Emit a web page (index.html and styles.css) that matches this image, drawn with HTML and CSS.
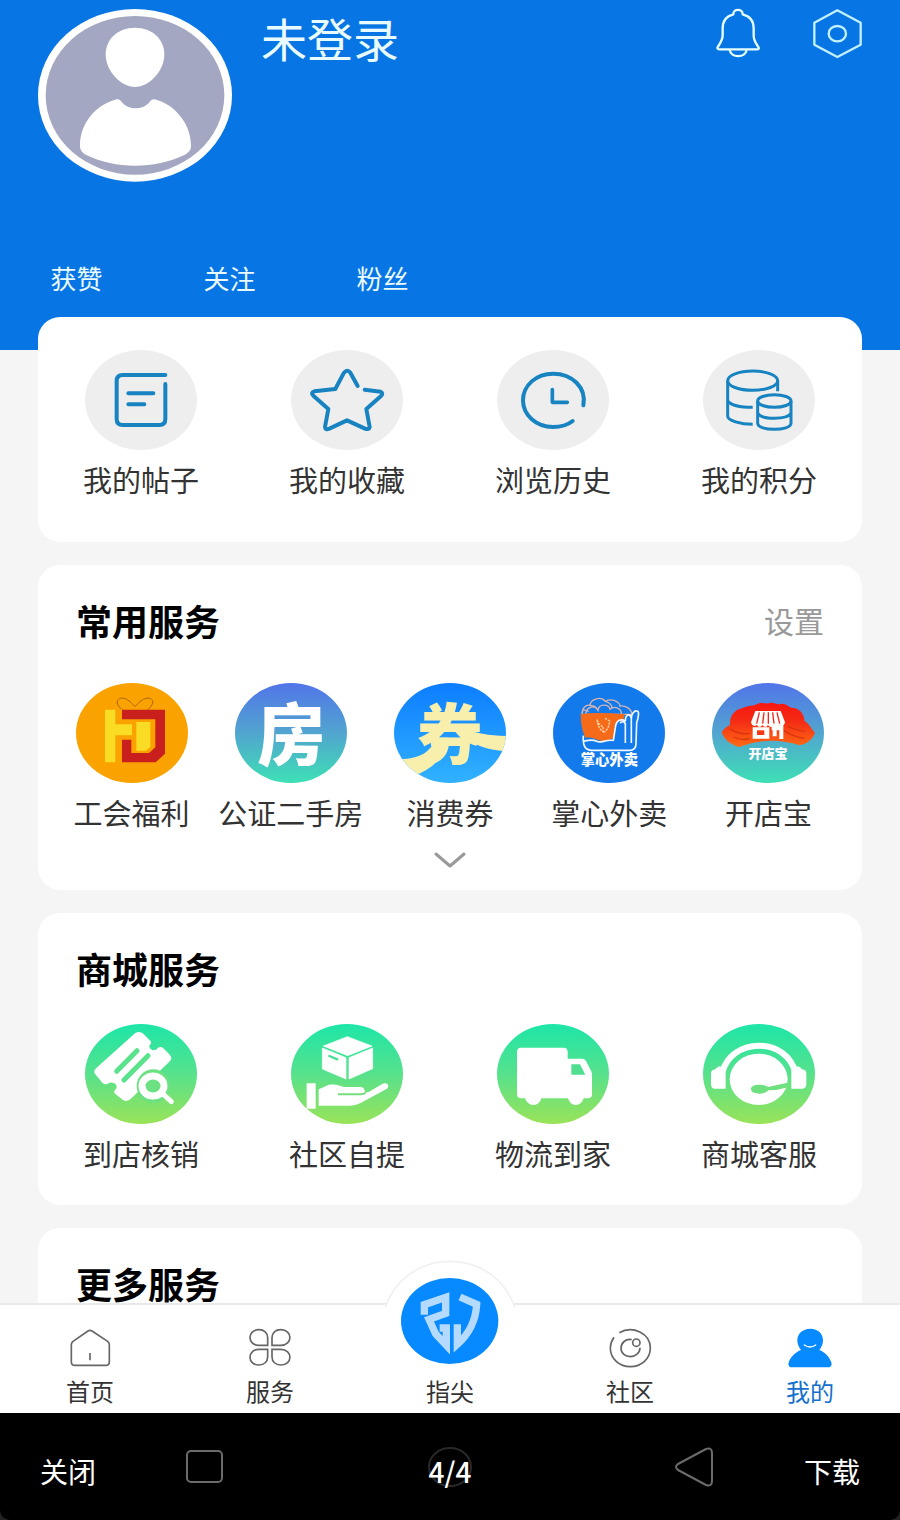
FILE: index.html
```html
<!DOCTYPE html>
<html lang="zh-CN">
<head>
<meta charset="utf-8">
<meta name="viewport" content="width=device-width, initial-scale=1">
<title>我的</title>
<link rel="stylesheet" href="styles.css">
</head>
<body>
<div class="app">
  <header class="profile">
    <div class="profile-top">
      <svg class="avatar" viewBox="114 21 582 528" aria-hidden="true">
        <ellipse cx="405" cy="286" rx="291" ry="259" fill="#fff"/>
        <ellipse cx="405" cy="286" rx="268" ry="238" fill="#a3a7c1"/>
        <path d="M405 83c52 0 88 35 88 80 0 50-45 98-88 98s-88-48-88-98c0-45 36-80 88-80z" fill="#fff"/>
        <path d="M350 298c8-2 11 3 17 10 20 22 60 22 80 0 6-7 9-12 17-10 66 17 110 80 109 140 0 14-8 20-20 27-90 43-206 43-294 0-12-7-19-14-19-28 0-66 46-122 110-139z" fill="#fff"/>
      </svg>
      <h1 class="name">未登录</h1>
      <div class="actions">
        <button class="plain" aria-label="消息">
          <svg class="bell" viewBox="108 21 132 162" fill="none" stroke="#e6ffff" stroke-width="7" stroke-linejoin="round">
            <path d="M160 43c0-18 28-18 28 0 24 6 33 20 33 42v22c0 14 5 20 14 34 3 5 1 7-5 7H118c-6 0-7-3-4-8 9-14 14-20 14-34V85c0-22 9-36 32-42z"/>
            <path d="M149 149c3 26 48 26 51 0"/>
          </svg>
        </button>
        <button class="plain" aria-label="设置">
          <svg class="gear" viewBox="396 21 150 162" fill="none" stroke="#c2f1ff" stroke-width="7" stroke-linejoin="round">
            <path d="M472 31l70 37v66l-70 37-69-37V68z"/>
            <ellipse cx="472" cy="101" rx="26" ry="23"/>
          </svg>
        </button>
      </div>
    </div>
    <nav class="stats">
      <a href="#likes">获赞</a>
      <a href="#following">关注</a>
      <a href="#fans">粉丝</a>
    </nav>
  </header>

  <main class="content">
    <section class="card shortcuts">
      <div class="grid four">
        <a class="item" href="#posts">
          <svg class="icon" viewBox="73 30 336 300" fill="none" stroke="#1783c0" stroke-width="12" stroke-linecap="round" stroke-linejoin="round">
            <ellipse cx="241" cy="180" rx="168" ry="150" fill="#eee" stroke="none"/>
            <path d="M314 105H186q-18 0-18 18v114q0 18 18 18h110q18 0 18-18V132M203 160h75M203 193h48"/>
          </svg>
          <span>我的帖子</span>
        </a>
        <a class="item" href="#favorites">
          <svg class="icon" viewBox="691 30 336 300" fill="none" stroke="#1783c0" stroke-width="12" stroke-linecap="round" stroke-linejoin="round">
            <ellipse cx="859" cy="180" rx="168" ry="150" fill="#eee" stroke="none"/>
            <path d="M891 138l-22-40q-9-12-19 0l-26 49-63 7q-12 4-3 13l45 40-10 54q1 10 13 5l53-25 54 25q12 4 14-5l-10-54 44-39q8-8-1-13l-48-6"/>
          </svg>
          <span>我的收藏</span>
        </a>
        <a class="item" href="#history">
          <svg class="icon" viewBox="78 30 336 300" fill="none" stroke="#1783c0" stroke-width="12" stroke-linecap="round" stroke-linejoin="round">
            <ellipse cx="246" cy="180" rx="168" ry="150" fill="#eee" stroke="none"/>
            <path d="M337 196C347 142 303 101 246 101c-50 0-90 35-90 80s40 80 90 80c23 0 44-6 59-18"/>
            <path d="M244 149v38h45" stroke-width="11"/>
          </svg>
          <span>浏览历史</span>
        </a>
        <a class="item" href="#points">
          <svg class="icon" viewBox="698 30 336 300" fill="none" stroke="#1783c0" stroke-width="9">
            <ellipse cx="866" cy="180" rx="168" ry="150" fill="#eee" stroke="none"/>
            <ellipse cx="847" cy="122" rx="75" ry="29"/>
            <path d="M772 122v107c0 12 38 24 75 24M772 183c10 13 42 19 75 19M922 122v32"/>
            <ellipse cx="912" cy="183" rx="50" ry="19"/>
            <path d="M862 183v67c0 24 100 24 100 0v-67M862 220c12 20 88 20 100 0"/>
          </svg>
          <span>我的积分</span>
        </a>
      </div>
    </section>

    <section class="card common">
      <div class="card-head">
        <h2>常用服务</h2>
        <a class="more" href="#settings">设置</a>
      </div>
      <div class="grid five">
        <a class="item" href="#welfare">
          <svg class="icon" viewBox="138 278 336 300">
            <ellipse cx="306" cy="428" rx="168" ry="150" fill="#faa200"/>
            <path d="M276 358q-20-18-13-28c14-18 40 4 52 19 12-15 38-37 52-19q6 10-13 28" fill="none" stroke="#ad6413" stroke-width="3"/>
            <path d="M276 358h129v132l-28 26H276v-68h28v40h53l19-17v-84H276z" fill="#c9201e"/>
            <path d="M225 358h31v44h50v33h-50v81h-31zM319 395h42v75l-14 11h-28z" fill="#fbdc24"/>
          </svg>
          <span>工会福利</span>
        </a>
        <a class="item" href="#house">
          <svg class="icon" viewBox="615 278 336 300">
            <defs><linearGradient id="sky" x1="0" y1="0" x2="0" y2="1"><stop offset="0" stop-color="#5275e8"/><stop offset=".5" stop-color="#51a5cf"/><stop offset="1" stop-color="#3ee0b5"/></linearGradient></defs>
            <ellipse cx="783" cy="428" rx="168" ry="150" fill="url(#sky)"/>
            <text class="glyph" x="784" y="509" font-size="204" fill="#fff">房</text>
          </svg>
          <span>公证二手房</span>
        </a>
        <a class="item" href="#coupon">
          <svg class="icon" viewBox="1094 278 336 300">
            <defs>
              <linearGradient id="azure" x1="0" y1="0" x2="0" y2="1"><stop offset="0" stop-color="#0c7dff"/><stop offset="1" stop-color="#31b2ff"/></linearGradient>
              <clipPath id="disc"><ellipse cx="1262" cy="428" rx="168" ry="150"/></clipPath>
            </defs>
            <ellipse cx="1262" cy="428" rx="168" ry="150" fill="url(#azure)"/>
            <path clip-path="url(#disc)" d="M1218 442c-10 40-45 64-105 64l42 50c55-20 92-56 103-114zM1300 411c40 20 85 26 140 26v46c-65-3-110-16-150-59z" fill="#f8efac"/>
            <text class="glyph" x="1262" y="507" font-size="198" fill="#f8efac">券</text>
          </svg>
          <span>消费券</span>
        </a>
        <a class="item" href="#takeout">
          <svg class="icon" viewBox="307 278 336 300">
            <ellipse cx="475" cy="428" rx="168" ry="150" fill="#127aeb"/>
            <g fill="#127aeb" stroke="#d3b3b4" stroke-width="4">
              <path d="M394 372c0-20 12-30 24-27 2-20 34-28 46-12 18-10 42 0 44 14 15-3 34 8 36 25z"/>
              <path d="M406 372c-1-22 26-30 36-12 2-20 32-20 36-3 14-12 36-3 34 15M418 346q14-2 20 8M464 333q20 6 20 20M396 360q12-2 18 4" fill="none"/>
            </g>
            <path d="M390 372q45-8 132 0l-6 30c-18 20-24 54-60 50-24-4-30-12-52-10-10-20-14-44-14-70z" fill="#f66b19"/>
            <path d="M439 388q8 20 18 20v16q-14-8-18-36zM463 384l14 8q-2 24-17 34" fill="none" stroke="#ffd6a8" stroke-width="4" stroke-dasharray="7 3"/>
            <path d="M492 452V412c2-22 14-26 30-20l22 0v84H440z" fill="#127aeb"/>
            <path d="M398 436c-2 30 5 44 26 44h112c14 0 20-7 20-20l2-62q10-34 2-36c-10-3-18 10-18 24-2-20-18-14-18 6-14-8-28-2-30 20l-6 38c-28-2-36 10-50 3-16-8-24-3-40 0M524 398v60M542 384v74M508 398q12-10 16 4" fill="none" stroke="#f1f7ff" stroke-width="5" stroke-linejoin="round"/>
            <text class="glyph" x="476" y="523" font-size="43" fill="#fff">掌心外卖</text>
          </svg>
          <span>掌心外卖</span>
        </a>
        <a class="item" href="#shop">
          <svg class="icon" viewBox="785 278 336 300">
            <defs><linearGradient id="flame" x1="0" y1="0" x2="0" y2="1"><stop offset="0" stop-color="#fa1710"/><stop offset=".4" stop-color="#f42a14"/><stop offset="1" stop-color="#ff6a14"/></linearGradient></defs>
            <ellipse cx="953" cy="428" rx="168" ry="150" fill="url(#sky)"/>
            <path d="M814 426q10-16 25-22c-2-24 12-46 36-50 22-10 34-6 44-12 16-10 28 2 38-4 14-4 20 6 34 3 18-4 24 14 40 12 18 2 32 22 31 38 18 12 20 24 32 36-8 22-24 32-46 38q-90-30-182 5c-24-7-44-20-52-44z" fill="url(#flame)"/>
            <path d="M838 415q30 20 62 14M850 440q24 12 48 4M1000 420q30 20 62 24M1012 408q24 12 52 16" fill="none" stroke="#d8330f" stroke-width="4"/>
            <path d="M915 362h76l13 34q-4 16-17 8-8 12-17 0-8 12-17 0-8 12-17 0-8 12-17 0-12 8-17-8z" fill="#fff"/>
            <path d="M927 366l-8 34M941 366l-4 34M954 366v34M967 366l4 34M980 366l8 34" stroke="#f52617" stroke-width="4"/>
            <path d="M907 411h50v34h-50zM964 405h35v41h-12v-26h-8v18h-12v-18h-3z" fill="#fff"/>
            <path d="M920 420h22v14h-22z" fill="#f63818"/>
            <text class="glyph" x="953" y="502" font-size="39" fill="#fff">开店宝</text>
          </svg>
          <span>开店宝</span>
        </a>
      </div>
      <button class="plain expand" aria-label="展开">
        <svg viewBox="0 0 32 16" fill="none" stroke="#999" stroke-width="3" stroke-linecap="round" stroke-linejoin="round"><path d="M2 2l14 12L30 2"/></svg>
      </button>
    </section>

    <section class="card mall">
      <div class="card-head"><h2>商城服务</h2></div>
      <div class="grid four">
        <a class="item" href="#verify">
          <svg class="icon" viewBox="73 252 336 300">
            <defs><linearGradient id="mint" x1="0" y1="0" x2="0" y2="1"><stop offset="0" stop-color="#1de6a8"/><stop offset=".5" stop-color="#57e18c"/><stop offset="1" stop-color="#9ae358"/></linearGradient></defs>
            <ellipse cx="241" cy="402" rx="168" ry="150" fill="url(#mint)"/>
            <path d="M223 280q13-8 25 1l22 23q4 6-3 11-4 10 8 15 10 3 17-7 9-5 16 2l20 20q9 11-2 20L213 474q-12 14-26 6l-24-19q-6-8 3-14 6-12-6-18-12-4-20 3-9 2-15-4l-21-25q-8-9 3-19z" fill="#fff"/>
            <path d="M168 394l61-62M190 420l72-73" stroke="#5be28c" stroke-width="15" stroke-linecap="round" fill="none"/>
            <circle cx="278" cy="438" r="50" fill="#6be182"/>
            <ellipse cx="277" cy="438" rx="33" ry="30" fill="none" stroke="#fff" stroke-width="21"/>
            <path d="M307 462l25 23" stroke="#fff" stroke-width="15" stroke-linecap="round"/>
          </svg>
          <span>到店核销</span>
        </a>
        <a class="item" href="#pickup">
          <svg class="icon" viewBox="691 252 336 300">
            <ellipse cx="859" cy="402" rx="168" ry="150" fill="url(#mint)"/>
            <path d="M860 290l74 28-73 29-73-29zM785 324l71 29v64l-71-30zM865 353l71-29v62l-71 31z" fill="#fff" stroke="#fff" stroke-width="2" stroke-linejoin="round"/>
            <path d="M806 348l24 10" stroke="#45df99" stroke-width="7" stroke-linecap="round"/>
            <path d="M738 430h27v76h-27zM774 448q10-4 22-10c18-10 42-2 54 3h50q13 2 13 17 14-1 25-10l28-17q10-4 16 3 3 9-6 14l-76 41q-16 8-32 8h-94z" fill="#fff"/>
            <path d="M832 463h68q10 0 15-5" fill="none" stroke="#74df7c" stroke-width="6"/>
          </svg>
          <span>社区自提</span>
        </a>
        <a class="item" href="#delivery">
          <svg class="icon" viewBox="78 72 336 300">
            <ellipse cx="246" cy="222" rx="168" ry="150" fill="url(#mint)"/>
            <path d="M150 143h128q12 0 12 12v21h43q8 0 12 7l14 27q4 6 4 14v59q0 12-12 12h-13q-6 20-24 20-17 0-23-20h-80q-5 20-24 20-18 0-25-20h-12q-12 0-12-12V155q0-12 12-12z" fill="#fff"/>
            <path d="M301 193h26l16 31h-42z" fill="#50df91"/>
          </svg>
          <span>物流到家</span>
        </a>
        <a class="item" href="#support">
          <svg class="icon" viewBox="698 72 336 300">
            <ellipse cx="866" cy="222" rx="168" ry="150" fill="url(#mint)"/>
            <path d="M757 214c12-44 54-77 109-77s96 33 108 77" fill="none" stroke="#fff" stroke-width="18"/>
            <path d="M766 206v60h-34q-10-1-10-14v-31q0-12 13-13 5-7 13-9zM963 206v60h33q12-1 12-14v-31q0-12-13-13-5-7-13-9z" fill="#fff"/>
            <ellipse cx="865" cy="238" rx="87" ry="77" fill="#fff"/>
            <path d="M958 247l-64 14c-14-10-52-10-52 6 0 18 42 18 52 4q26 0 52-8l12-4z" fill="#6ee07e"/>
          </svg>
          <span>商城客服</span>
        </a>
      </div>
    </section>

    <section class="card extra">
      <div class="card-head"><h2>更多服务</h2></div>
    </section>
  </main>

  <nav class="tabs">
    <a class="tab" href="#home">
      <svg viewBox="204 324 132 120" fill="none" stroke="#666" stroke-width="5" stroke-linejoin="round"><path d="M264 333q6-4 12 0l47 31q5 4 5 10v51q0 11-11 11h-92q-11 0-11-11v-51q0-6 5-10zM270 399v22"/></svg>
      <span>首页</span>
    </a>
    <a class="tab" href="#services">
      <svg viewBox="745 324 132 120" fill="none" stroke="#666" stroke-width="5"><path d="M804 376h-26c-36 0-36-47 0-47 15 0 26 10 26 24zM817 376h26c37 0 37-47 0-47-15 0-26 10-26 24zM804 388h-26c-36 0-36 47 0 47 15 0 26-10 26-24zM817 388h26c37 0 37 47 0 47-15 0-26-10-26-24z"/></svg>
      <span>服务</span>
    </a>
    <a class="tab" href="#zhijian">
      <svg class="bump" viewBox="6 24 408 324" aria-hidden="true">
        <ellipse cx="210" cy="216" rx="202" ry="184" fill="#fff"/>
        <path d="M16 172C42 92 116 34 210 34s168 58 194 138" fill="none" stroke="#f0f0f0" stroke-width="5"/>
        <ellipse cx="209" cy="213" rx="146" ry="129" fill="#078aff"/>
        <g fill="none" stroke="#b4daff" stroke-width="22">
          <path d="M133 194v-30l64-22v48l-50 18 20 44 32 34v-52h-20"/>
          <path d="M240 141l50 22q-4 72-58 120v-60"/>
        </g>
      </svg>
      <span>指尖</span>
    </a>
    <a class="tab" href="#community">
      <svg viewBox="475 322 132 120" fill="none" stroke="#666" stroke-width="5"><path d="M509 336c40-23 93 2 93 46 0 32-27 56-60 56s-60-24-60-56q0-16 11-32M546 357c-18-4-32 10-32 26 0 15 13 25 28 25s29-11 29-27"/><circle cx="560" cy="366" r="11"/></svg>
      <span>社区</span>
    </a>
    <a class="tab active" href="#me" aria-current="page">
      <svg viewBox="1015 322 132 120"><path d="M1082 324c23 0 38 15 38 35q0 16-11 29c20 8 33 24 37 41q0 11-12 11h-106q-12 0-12-11c4-17 18-33 38-41q-11-13-11-29c0-20 16-35 39-35z" fill="#078aff"/><path d="M1064 373q17 12 34 0" fill="none" stroke="#fff" stroke-width="4" stroke-linecap="round"/></svg>
      <span>我的</span>
    </a>
  </nav>

  <footer class="viewer">
    <div class="viewer-bar">
      <div class="system-keys" aria-hidden="true">
        <svg viewBox="0 0 44 44" fill="none" stroke="#6b6b6b" stroke-width="2"><rect x="4" y="6" width="35" height="31" rx="4"/></svg>
        <svg viewBox="0 0 44 44" fill="none" stroke="#282828" stroke-width="2"><ellipse cx="22" cy="22" rx="21" ry="19"/></svg>
        <svg viewBox="0 0 44 44" fill="none" stroke="#6b6b6b" stroke-width="2" stroke-linejoin="round"><path d="M5 19L33 4q6-2 6 4v28q0 6-6 4L5 25q-4-3 0-6z"/></svg>
      </div>
      <button class="plain">关闭</button>
      <span class="counter">4/4</span>
      <button class="plain">下载</button>
    </div>
  </footer>
</div>
</body>
</html>
```
FILE: styles.css
```css
* { box-sizing: border-box; }
body {
  margin: 0;
  background: #f5f5f5;
  color: #333;
  font-family: "Noto Sans CJK SC", sans-serif;
}
h1, h2 { margin: 0; }
a { color: inherit; text-decoration: none; }
svg { display: block; }
.plain {
  padding: 0;
  border: 0;
  background: none;
  color: inherit;
  font: inherit;
  cursor: pointer;
}
.app {
  display: flex;
  flex-direction: column;
  min-height: 100vh;
}

/* Profile header */
.profile {
  padding: 7px 0 52px;
  background: #0775e4;
  color: #e9fbff;
}
.profile-top {
  display: flex;
  align-items: flex-start;
  padding: 0 38px;
}
.avatar { width: 194px; height: 176px; }
.name {
  flex: 1;
  margin-left: 29px;
  font-size: 46px;
  font-weight: 400;
  line-height: 60px;
}
.actions { display: flex; gap: 52px; }
.bell { width: 44px; height: 54px; }
.gear { width: 50px; height: 54px; }
.stats {
  display: grid;
  grid-template-columns: repeat(3, 17%);
  margin-top: 75px;
  font-size: 26px;
  line-height: 40px;
  text-align: center;
}

/* Cards */
.content {
  display: flex;
  flex: 1;
  flex-direction: column;
  gap: 23px;
  margin-top: -33px;
  padding: 0 38px;
}
.card {
  border-radius: 22px;
  background: #fff;
}
.shortcuts { padding: 33px 0 42px; }
.common { padding: 37px 0 22px; }
.mall { padding: 37px 0 31px; }
.extra {
  flex: 1;
  padding-top: 37px;
  border-radius: 22px 22px 0 0;
}
.card-head {
  display: flex;
  align-items: center;
  justify-content: space-between;
  padding: 0 38px;
  line-height: 36px;
}
.card-head h2 {
  color: #000;
  font-size: 36px;
  font-weight: 700;
}
.more { color: #999; font-size: 30px; }
.grid { display: grid; }
.four { grid-template-columns: repeat(4, 1fr); }
.five {
  grid-template-columns: repeat(5, 1fr);
  margin-top: 45px;
  padding: 0 14px;
}
.mall .grid { margin-top: 38px; }
.item {
  display: flex;
  flex-direction: column;
  align-items: center;
  gap: 9px;
  font-size: 29px;
  line-height: 41px;
  white-space: nowrap;
}
.icon { width: 112px; height: 100px; overflow: visible; }
.glyph { font-weight: 900; text-anchor: middle; }
.expand {
  display: block;
  margin: 19px auto 0;
}
.expand svg { width: 32px; height: 16px; }

/* Tab bar */
.tabs {
  position: relative;
  display: grid;
  grid-template-columns: repeat(5, 1fr);
  border-top: 2px solid #e9e9e9;
  background: #fff;
}
.tab {
  display: flex;
  flex-direction: column;
  align-items: center;
  justify-content: flex-end;
  gap: 6px;
  padding: 23px 0 6px;
  font-size: 24px;
  line-height: 33px;
}
.tab svg { width: 44px; height: 40px; }
.tab .bump {
  position: absolute;
  top: -47px;
  width: 136px;
  height: 108px;
}
.tab.active { color: #1470cc; }

/* Viewer controls */
.viewer { background: #222; }
.viewer-bar {
  position: relative;
  display: grid;
  grid-template-columns: 1fr auto 1fr;
  align-items: center;
  padding: 38px 40px 29px;
  border-radius: 0 0 10px 10px;
  background: #000;
  color: #fff;
  font-size: 28px;
  line-height: 40px;
}
.viewer-bar .plain { position: relative; justify-self: start; }
.viewer-bar .plain:last-child { justify-self: end; }
.counter { position: relative; font-weight: 500; }
.system-keys {
  position: absolute;
  inset: 32px 82px auto;
  display: grid;
  grid-template-columns: repeat(3, 1fr);
  justify-items: center;
}
.system-keys svg { width: 44px; height: 44px; }
```
